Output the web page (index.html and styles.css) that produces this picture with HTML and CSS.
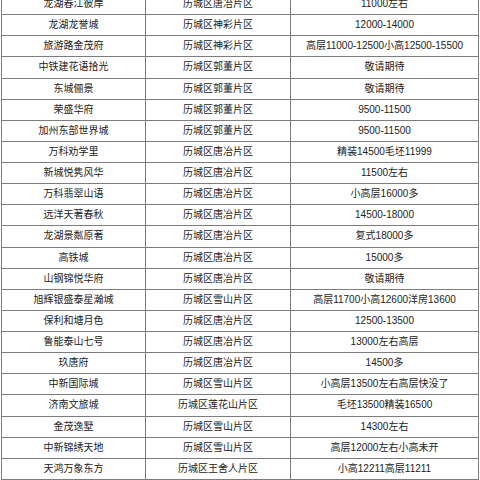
FILE: index.html
```html
<!DOCTYPE html>
<html lang="zh-CN">
<head>
<meta charset="utf-8">
<title>楼盘价格表</title>
<link rel="stylesheet" href="styles.css">
</head>
<body>
<div class="sheet">
  <div class="cell">龙湖春江彼岸</div><div class="cell">历城区唐冶片区</div><div class="cell">11000左右</div>
  <div class="cell">龙湖龙誉城</div><div class="cell">历城区神彩片区</div><div class="cell">12000-14000</div>
  <div class="cell">旅游路金茂府</div><div class="cell">历城区神彩片区</div><div class="cell">高层11000-12500小高12500-15500</div>
  <div class="cell">中铁建花语拾光</div><div class="cell">历城区郭董片区</div><div class="cell">敬请期待</div>
  <div class="cell">东城俪景</div><div class="cell">历城区郭董片区</div><div class="cell">敬请期待</div>
  <div class="cell">荣盛华府</div><div class="cell">历城区郭董片区</div><div class="cell">9500-11500</div>
  <div class="cell">加州东部世界城</div><div class="cell">历城区郭董片区</div><div class="cell">9500-11500</div>
  <div class="cell">万科劝学里</div><div class="cell">历城区唐冶片区</div><div class="cell">精装14500毛坯11999</div>
  <div class="cell">新城悦隽风华</div><div class="cell">历城区唐冶片区</div><div class="cell">11500左右</div>
  <div class="cell">万科翡翠山语</div><div class="cell">历城区唐冶片区</div><div class="cell">小高层16000多</div>
  <div class="cell">远洋天著春秋</div><div class="cell">历城区唐冶片区</div><div class="cell">14500-18000</div>
  <div class="cell">龙湖景粼原著</div><div class="cell">历城区唐冶片区</div><div class="cell">复式18000多</div>
  <div class="cell">高铁城</div><div class="cell">历城区唐冶片区</div><div class="cell">15000多</div>
  <div class="cell">山钢锦悦华府</div><div class="cell">历城区唐冶片区</div><div class="cell">敬请期待</div>
  <div class="cell">旭辉银盛泰星瀚城</div><div class="cell">历城区雪山片区</div><div class="cell">高层11700小高12600洋房13600</div>
  <div class="cell">保利和塘月色</div><div class="cell">历城区唐冶片区</div><div class="cell">12500-13500</div>
  <div class="cell">鲁能泰山七号</div><div class="cell">历城区唐冶片区</div><div class="cell">13000左右高层</div>
  <div class="cell">玖唐府</div><div class="cell">历城区唐冶片区</div><div class="cell">14500多</div>
  <div class="cell">中新国际城</div><div class="cell">历城区雪山片区</div><div class="cell">小高层13500左右高层快没了</div>
  <div class="cell">济南文旅城</div><div class="cell">历城区莲花山片区</div><div class="cell">毛坯13500精装16500</div>
  <div class="cell">金茂逸墅</div><div class="cell">历城区雪山片区</div><div class="cell">14300左右</div>
  <div class="cell">中新锦绣天地</div><div class="cell">历城区雪山片区</div><div class="cell">高层12000左右小高未开</div>
  <div class="cell">天鸿万象东方</div><div class="cell">历城区王舍人片区</div><div class="cell">小高12211高层11211</div>
</div>
</body>
</html>
```
FILE: styles.css
```css
html, body {
  margin: 0;
  padding: 0;
  background: #ffffff;
  overflow: hidden;
}
.sheet {
  display: grid;
  grid-template-columns: 143px 144px 187px;
  grid-auto-rows: 20.14px;
  gap: 1px;
  padding: 1px;
  width: max-content;
  margin: -7px 0 0 1px;
  background: #7d7d7d;
  font-family: "Liberation Sans", "Noto Sans CJK SC", sans-serif;
  font-size: 10px;
  color: #222222;
}
.cell {
  background: #ffffff;
  display: flex;
  align-items: center;
  justify-content: center;
  white-space: nowrap;
  line-height: 1;
}
```
